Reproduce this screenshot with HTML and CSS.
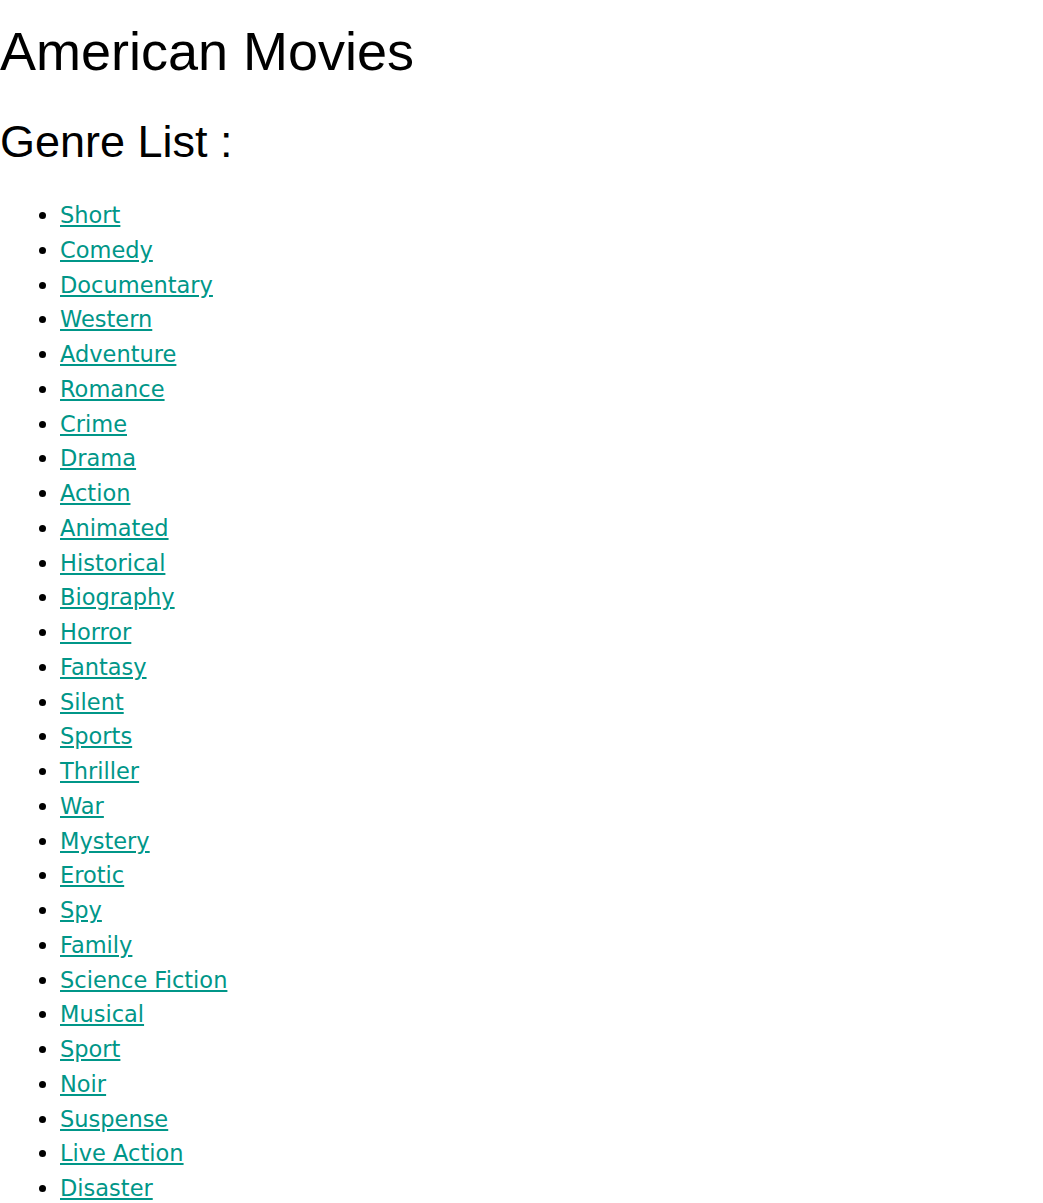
FILE: index.html
```html
<!DOCTYPE html>
<html>
<head>
<meta charset="utf-8">
<title>American Movies</title>
<link rel="stylesheet" href="styles.css">
</head>
<body>
<h1 class="title">American Movies</h1>
<h2 class="subtitle">Genre List :</h2>
<ul class="genres">
<li><a href="#">Short</a></li>
<li><a href="#">Comedy</a></li>
<li><a href="#">Documentary</a></li>
<li><a href="#">Western</a></li>
<li><a href="#">Adventure</a></li>
<li><a href="#">Romance</a></li>
<li><a href="#">Crime</a></li>
<li><a href="#">Drama</a></li>
<li><a href="#">Action</a></li>
<li><a href="#">Animated</a></li>
<li><a href="#">Historical</a></li>
<li><a href="#">Biography</a></li>
<li><a href="#">Horror</a></li>
<li><a href="#">Fantasy</a></li>
<li><a href="#">Silent</a></li>
<li><a href="#">Sports</a></li>
<li><a href="#">Thriller</a></li>
<li><a href="#">War</a></li>
<li><a href="#">Mystery</a></li>
<li><a href="#">Erotic</a></li>
<li><a href="#">Spy</a></li>
<li><a href="#">Family</a></li>
<li><a href="#">Science Fiction</a></li>
<li><a href="#">Musical</a></li>
<li><a href="#">Sport</a></li>
<li><a href="#">Noir</a></li>
<li><a href="#">Suspense</a></li>
<li><a href="#">Live Action</a></li>
<li><a href="#">Disaster</a></li>
</ul>
</body>
</html>
```
FILE: styles.css
```css
html, body {
  margin: 0;
  padding: 0;
  background: #ffffff;
}
body {
  font-family: "Liberation Sans", Arial, sans-serif;
  color: #000000;
}
.title {
  font-family: "Liberation Sans", Arial, sans-serif;
  font-weight: normal;
  font-size: 54px;
  margin: 20px 0 0 0;
}
.subtitle {
  font-family: "Liberation Sans", Arial, sans-serif;
  font-weight: normal;
  font-size: 45px;
  margin: 34px 0 30px 0;
}
.genres {
  margin: 0;
  padding-left: 60px;
  font-family: "DejaVu Sans", sans-serif;
  font-size: 22.5px;
  line-height: 34.75px;
}
.genres a {
  color: #009688;
  text-decoration: underline;
}
```
